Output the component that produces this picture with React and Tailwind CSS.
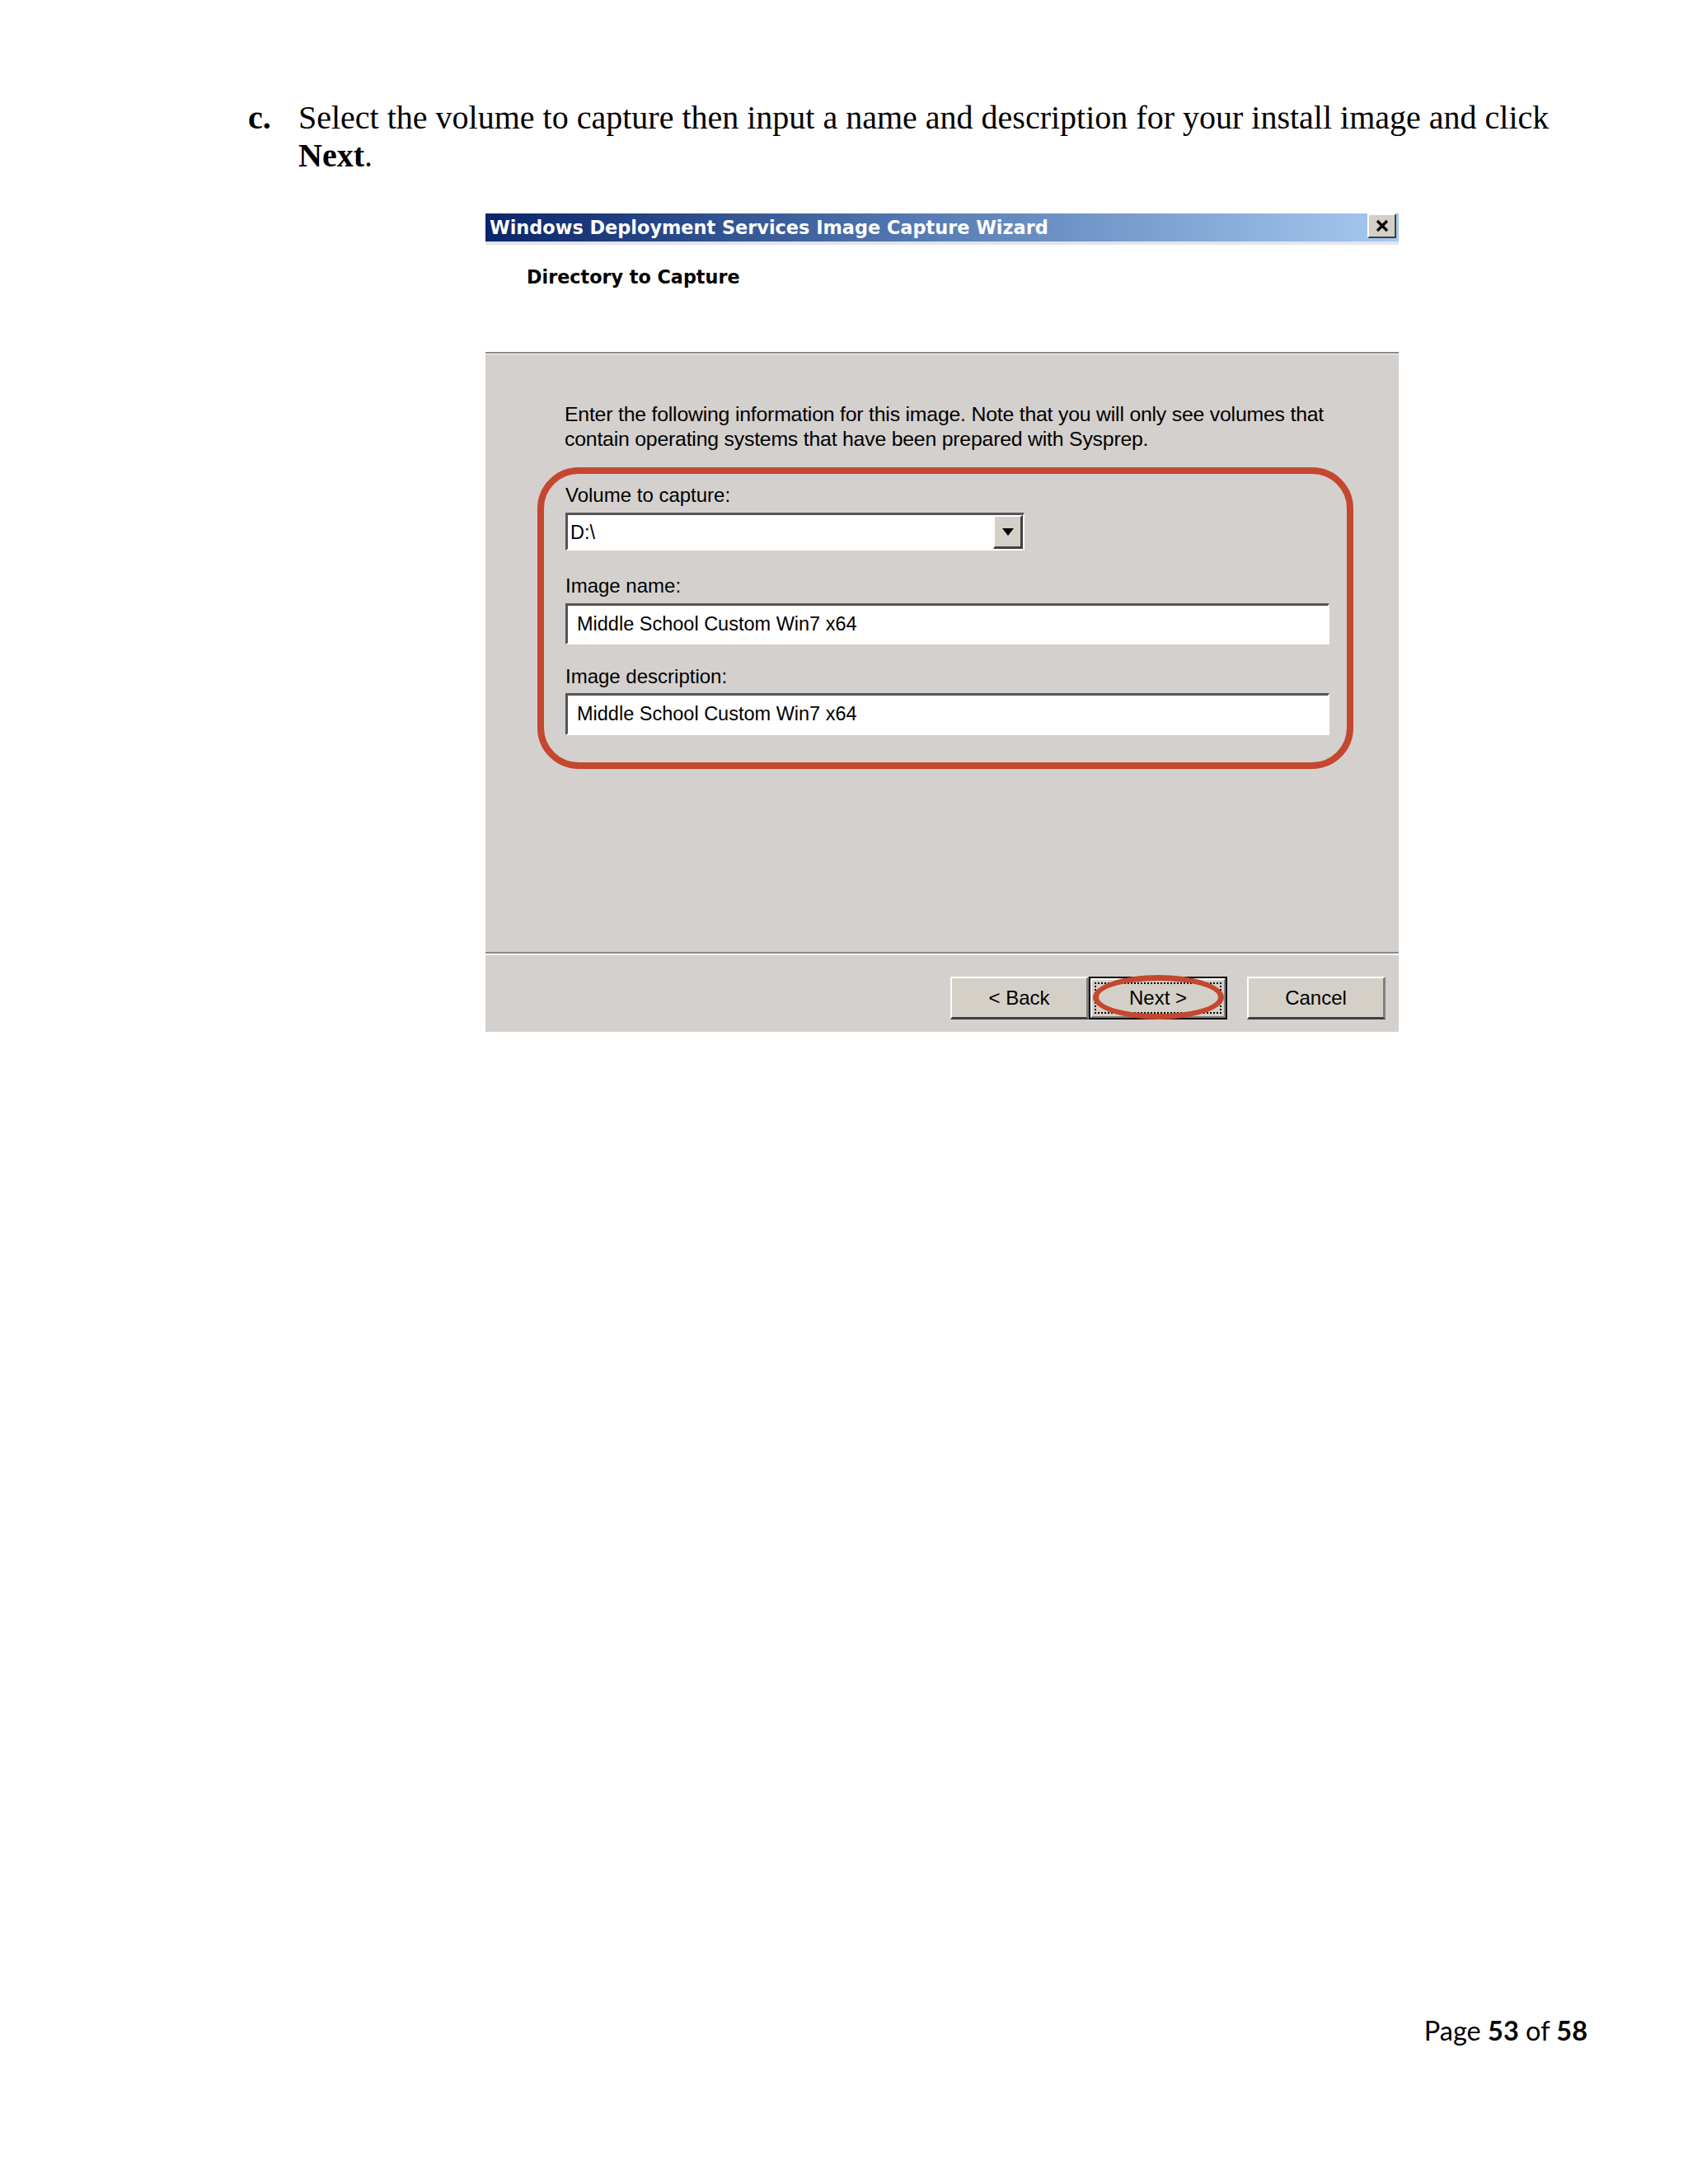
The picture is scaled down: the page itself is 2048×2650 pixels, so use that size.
import React from 'react';

const dlgFont = "font-['Liberation_Sans',Tahoma,sans-serif]";
const boldFont = "font-['DejaVu_Sans',Verdana,sans-serif]";

function CloseButton() {
  return (
    <div className="w-[35px] h-[30px] mr-[3px] bg-[#d4d0c8] border-t-2 border-l-2 border-t-white border-l-white border-b-2 border-r-2 border-b-[#404040] border-r-[#404040] flex items-center justify-center">
      <svg width="18" height="16" viewBox="0 0 18 16">
        <path d="M3 2 L15 14 M15 2 L3 14" stroke="#000" strokeWidth="3.2" />
      </svg>
    </div>
  );
}

function TextBox({ value, className = '' }) {
  return (
    <div className={`border-t-[3px] border-l-[3px] border-t-[#555] border-l-[#555] border-b-2 border-r-2 border-b-white border-r-white bg-white flex items-center pl-[11px] ${className}`}>
      <span className="text-[23.5px] text-black leading-none">{value}</span>
    </div>
  );
}

function ComboBox() {
  return (
    <div className="w-[557px] h-[46px] border-t-[3px] border-l-[3px] border-t-[#555] border-l-[#555] border-b-2 border-r-2 border-b-white border-r-white bg-white flex">
      <div className="flex-1 flex items-center pl-[3px] text-[23.5px] text-black">D:\</div>
      <div className="w-[36px] h-full bg-[#d4d0c8] border-t-2 border-l-2 border-t-white border-l-white border-b-[3px] border-r-[3px] border-b-[#404040] border-r-[#404040] flex items-center justify-center">
        <svg width="14" height="9" viewBox="0 0 14 9">
          <path d="M0 0 H14 L7 9 Z" fill="#000" />
        </svg>
      </div>
    </div>
  );
}

function WinButton({ children, isDefault }) {
  if (isDefault) {
    return (
      <div className="relative w-[168px] h-[52px] border-2 border-black">
        <div className="w-full h-full bg-[#d4d0c8] border-t-2 border-l-2 border-t-white border-l-white border-b-2 border-r-2 border-b-[#808080] border-r-[#808080] p-[3px]">
          <div className="w-full h-full border-2 border-dotted border-black flex items-center justify-center text-[24px] text-black">
            {children}
          </div>
        </div>
        <div className="absolute left-[3px] right-[2px] top-[-4px] bottom-[-2px] rounded-[50%] border-[7px] border-[#c4472f]" />
      </div>
    );
  }
  return (
    <div className="w-[168px] h-[52px] bg-[#d4d0c8] border-t-2 border-l-2 border-t-white border-l-white border-b-[3px] border-r-[3px] border-b-[#404040] border-r-[#808080] flex items-center justify-center text-[24px] text-black">
      {children}
    </div>
  );
}

export default function App() {
  return (
    <div className="w-[2048px] h-[2650px] bg-white flex flex-col">
      {/* instruction */}
      <div className="pt-[120px] pl-[301px] flex font-['Liberation_Serif','Times_New_Roman',serif] text-[40px] leading-[46px] text-black">
        <span className="w-[61px] shrink-0 font-bold">c.</span>
        <p className="w-[1560px]">
          Select the volume to capture then input a name and description for your install image and click <b>Next</b>.
        </p>
      </div>

      {/* wizard dialog */}
      <div className={`ml-[589px] mt-[47px] w-[1108px] ${dlgFont}`}>
        <div className="h-[34px] bg-linear-to-r from-[#0a246a] via-[#5a7fb6] to-[#a6caf0] flex items-start justify-between">
          <span className={`pl-[5px] text-white font-bold text-[22.4px] leading-[34px] ${boldFont}`}>
            Windows Deployment Services Image Capture Wizard
          </span>
          <CloseButton />
        </div>
        <div className="h-[4px] bg-[#e4e5ec]" />

        <div className="h-[130px] bg-white pl-[50px] pt-[24px]">
          <div className={`text-[22.3px] leading-[30px] font-bold text-black ${boldFont}`}>Directory to Capture</div>
        </div>
        <div className="h-[2px] bg-[#8a8a8a]" />
        <div className="h-[1px] bg-white" />

        <div className="h-[725px] bg-[#d4d0cd] pt-[58px]">
          <p className="ml-[96px] w-[950px] text-[24.8px] leading-[30px] tracking-[-0.2px] text-black">
            Enter the following information for this image. Note that you will only see volumes that contain operating systems that have been prepared with Sysprep.
          </p>

          <div className="ml-[63px] mt-[19px] w-[990px] border-[8px] border-[#c4472f] rounded-[50px] pl-[26px] pr-[21px] pt-[11px] pb-[33px] text-[24px] leading-[30px] text-black">
            <div>Volume to capture:</div>
            <div className="mt-[6px]">
              <ComboBox />
            </div>
            <div className="mt-[28px]">Image name:</div>
            <TextBox value="Middle School Custom Win7 x64" className="mt-[6px] h-[50px]" />
            <div className="mt-[24px]">Image description:</div>
            <TextBox value="Middle School Custom Win7 x64" className="mt-[5px] h-[51px]" />
          </div>
        </div>

        <div className="h-[2px] bg-[#8a8a8a]" />
        <div className="h-[2px] bg-white" />
        <div className="h-[93px] bg-[#d4d0cd] pt-[26px] pr-[16px] flex justify-end items-start">
          <WinButton>&lt; Back</WinButton>
          <WinButton isDefault>Next &gt;</WinButton>
          <div className="w-[24px]" />
          <WinButton>Cancel</WinButton>
        </div>
      </div>

      {/* footer */}
      <div className="mt-auto mb-[166px] pr-[122px] flex justify-end font-['Lato','Open_Sans',sans-serif] text-[32.5px] leading-[40px] text-black">
        <span>
          Page <b>53</b> of <b>58</b>
        </span>
      </div>
    </div>
  );
}
